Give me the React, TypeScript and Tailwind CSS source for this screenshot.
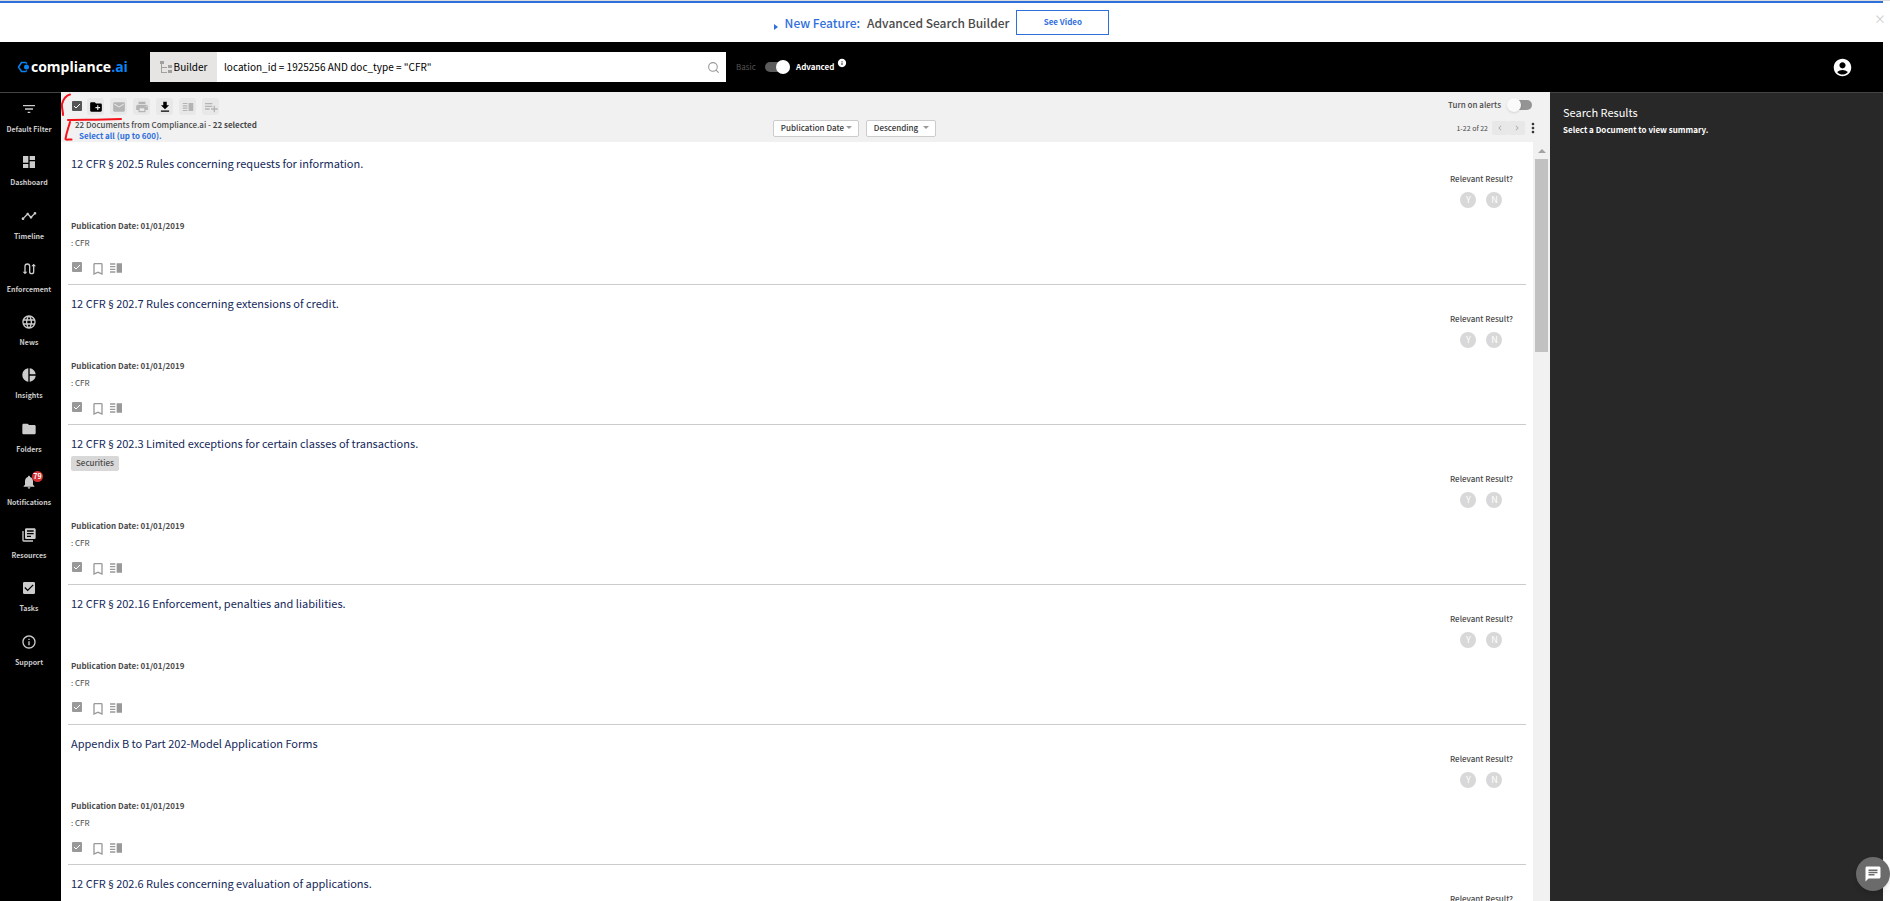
import type { ReactNode } from 'react';
import type { IconType } from 'react-icons';
import { Search } from 'lucide-react';
import {
  MdAccountCircle,
  MdChat,
  MdCheckBox,
  MdChevronLeft,
  MdChevronRight,
  MdBookmarkBorder,
  MdCreateNewFolder,
  MdDashboard,
  MdEmail,
  MdFileDownload,
  MdFilterList,
  MdFolder,
  MdInfo,
  MdInfoOutline,
  MdLanguage,
  MdLibraryBooks,
  MdMoreVert,
  MdNotifications,
  MdPieChart,
  MdPlaylistAdd,
  MdPrint,
  MdTimeline,
  MdVerticalSplit,
} from 'react-icons/md';

interface NavItem {
  label: string;
  icon: IconType | typeof EnforcementIcon;
  badge?: number;
}

interface Doc {
  title: string;
  tag?: string;
}

function EnforcementIcon({ className }: { className?: string }) {
  return (
    <svg viewBox="0 0 24 24" className={className} fill="none" stroke="currentColor" strokeWidth="2">
      <path d="M6 18V8a3.500 3.500 0 0 1 7 0v8a3 3 0 0 0 6 0V6" />
      <path d="M2.500 16h7L6 20zM15.500 8h7L19 4z" fill="currentColor" stroke="none" />
    </svg>
  );
}

const navItems: NavItem[] = [
  { label: 'Default Filter', icon: MdFilterList },
  { label: 'Dashboard', icon: MdDashboard },
  { label: 'Timeline', icon: MdTimeline },
  { label: 'Enforcement', icon: EnforcementIcon },
  { label: 'News', icon: MdLanguage },
  { label: 'Insights', icon: MdPieChart },
  { label: 'Folders', icon: MdFolder },
  { label: 'Notifications', icon: MdNotifications, badge: 79 },
  { label: 'Resources', icon: MdLibraryBooks },
  { label: 'Tasks', icon: MdCheckBox },
  { label: 'Support', icon: MdInfoOutline },
];

const documents: Doc[] = [
  { title: '12 CFR § 202.5 Rules concerning requests for information.' },
  { title: '12 CFR § 202.7 Rules concerning extensions of credit.' },
  { title: '12 CFR § 202.3 Limited exceptions for certain classes of transactions.', tag: 'Securities' },
  { title: '12 CFR § 202.16 Enforcement, penalties and liabilities.' },
  { title: 'Appendix B to Part 202-Model Application Forms' },
  { title: '12 CFR § 202.6 Rules concerning evaluation of applications.' },
];

function Banner() {
  return (
    <div className="relative flex h-[42px] shrink-0 flex-col bg-white">
      <div className="h-px bg-[#dcdcdc]" />
      <div className="mr-[7px] h-[2px] bg-[#2f6fdc]" />
      <div className="flex flex-1 items-center justify-center pr-[7px] text-[12px] font-medium">
        <span className="mt-2 mr-[7px] border-y-[3px] border-l-4 border-y-transparent border-l-[#2f6fdc]" />
        <span className="mr-[7px] text-[#2f6fdc]">New Feature:</span>
        <span className="mr-[7px] text-[#4a4a4a]">Advanced Search Builder</span>
        <button className="h-[25px] w-[93px] border border-[#2f6fdc] pb-[2px] text-[8px] font-bold text-[#2f6fdc]">
          See Video
        </button>
      </div>
      <button aria-label="Close" className="absolute top-3 right-1 text-[12px] leading-[14px] text-[#ccc]">
        ×
      </button>
    </div>
  );
}

function Header() {
  return (
    <header className="mr-[7px] flex h-[50px] shrink-0 items-center bg-black">
      {/* Logo */}
      <a href="#" className="flex w-[150px] items-center pb-[2px] pl-[17px] font-['Open_Sans',sans-serif] text-[14px] font-bold">
        <svg viewBox="0 0 14 12" className="mt-[2px] h-3 w-[14px]" fill="none">
          <path d="M10 2.500L8.500 1.500H4.500L1.500 6l3 4.500h4L10 9.500" stroke="#0a84f5" strokeWidth="1.500" />
          <circle cx="9.500" cy="6" r="2.500" fill="#0a84f5" />
        </svg>
        <span className="text-white">compliance</span>
        <span className="text-[#0a84f5]">.ai</span>
      </a>

      {/* Search */}
      <div className="flex h-[30px] w-[576px] items-center bg-white">
        <button className="flex h-full w-[67px] shrink-0 items-center justify-center bg-[#e6e5e3] pb-[2px] text-[10px] text-black">
          <svg viewBox="0 0 12 12" className="mt-[2px] mr-[2px] h-3 w-3" fill="#a0a0a0">
            <path d="M0 0h4v3H0zM8 4h4v3H8zM8 9h4v3H8zM1 3h1v3h5v1H2v4h5v1H1z" />
          </svg>
          Builder
        </button>
        <input
          aria-label="Search query"
          className="h-full min-w-0 flex-1 px-[7px] pb-[2px] text-[10px] text-black outline-none"
          defaultValue={'location_id = 1925256 AND doc_type = "CFR"'}
        />
        <button aria-label="Search" className="mr-[6px]">
          <Search className="h-[13px] w-[13px] text-[#999]" />
        </button>
      </div>

      {/* Mode switch */}
      <label className="ml-[10px] flex items-center text-[8px]">
        <span className="w-[29px] text-[#555]">Basic</span>
        <input
          type="checkbox"
          defaultChecked
          className="relative mr-[6px] h-[10px] w-[25px] appearance-none rounded-full bg-[#5c5c5c] before:absolute before:-top-[2px] before:right-0 before:h-[14px] before:w-[14px] before:rounded-full before:bg-white"
        />
        <span className="font-bold text-white">Advanced</span>
      </label>
      <MdInfo className="mb-2 ml-[3px] h-[10px] w-[10px] text-white" />
      <button aria-label="Account" className="mr-[30px] ml-auto">
        <MdAccountCircle className="h-[21px] w-[21px] text-white" />
      </button>
    </header>
  );
}

function Sidebar() {
  return (
    <nav className="w-[61px] shrink-0 border-t border-[#444] bg-black">
      <div className="flex h-[586px] flex-col">
        {navItems.map(({ label, icon: Icon, badge }) => (
          <a key={label} href="#" className="flex flex-1 flex-col items-center pr-[3px] pt-2 text-[7px] font-bold text-[#ccc]">
            <span className="relative mb-[7px]">
              <Icon className="h-4 w-4" />
              {badge && (
                <span className="absolute -top-[3px] left-[11px] flex h-[11px] w-[11px] items-center justify-center rounded-full bg-[#d32f2f] text-[7px] font-bold text-white">
                  {badge}
                </span>
              )}
            </span>
            <span className="leading-[10px] whitespace-nowrap">{label}</span>
          </a>
        ))}
      </div>
    </nav>
  );
}

function CheckMark({ label, className }: { label: string; className: string }) {
  return (
    <span className="relative flex">
      <input
        type="checkbox"
        aria-label={label}
        defaultChecked
        className={`h-[10px] w-[10px] appearance-none rounded-[1px] ${className}`}
      />
      <svg viewBox="0 0 10 10" className="pointer-events-none absolute inset-0 h-[10px] w-[10px]" fill="none" stroke="white">
        <path d="M2 5l2 2 4-4" />
      </svg>
    </span>
  );
}

function ToolButton({ label, dark, children }: { label: string; dark?: boolean; children: ReactNode }) {
  return (
    <button
      aria-label={label}
      className={`flex h-[17px] w-[17px] items-center justify-center rounded-[3px] bg-[#e8e8e8] ${dark ? 'text-black' : 'text-[#b4b4b4]'}`}
    >
      {children}
    </button>
  );
}

function SortSelect({ label, value, className }: { label: string; value: string; className: string }) {
  return (
    <span className="relative flex">
      <select
        aria-label={label}
        className={`h-[17px] appearance-none rounded-[2px] border border-[#ccc] bg-white pb-[2px] pl-[7px] text-[8px] leading-[13px] font-medium text-[#333] ${className}`}
      >
        <option>{value}</option>
      </select>
      <span className="pointer-events-none absolute top-[6px] right-[7px] border-x-[3px] border-t-[3px] border-x-transparent border-t-[#999]" />
    </span>
  );
}

function Toolbar() {
  return (
    <div className="grid h-[50px] shrink-0 grid-cols-[7fr_auto_6fr] bg-[#f1f1f1] text-[8px] text-[#4a4a4a]">
      <div className="pt-[6px] pl-[11px]">
        <div className="flex items-center gap-[6px]">
          <span className="-mr-px mb-[2px]">
            <CheckMark label="Select all" className="bg-[#555]" />
          </span>
          <ToolButton label="Add to folder" dark><MdCreateNewFolder className="h-[14px] w-[14px]" /></ToolButton>
          <ToolButton label="Email"><MdEmail className="h-[14px] w-[14px]" /></ToolButton>
          <ToolButton label="Print"><MdPrint className="h-[14px] w-[14px]" /></ToolButton>
          <ToolButton label="Download" dark><MdFileDownload className="h-[14px] w-[14px]" /></ToolButton>
          <ToolButton label="Compare"><MdVerticalSplit className="h-[14px] w-[14px]" /></ToolButton>
          <ToolButton label="Add to list"><MdPlaylistAdd className="h-[16px] w-[16px]" /></ToolButton>
        </div>
        <p className="mt-1 pl-[3px] leading-[11px] font-medium">
          22 Documents from Compliance.ai - <b>22 selected</b>
        </p>
        <a href="#" className="block pl-[7px] leading-[11px] font-bold text-[#2f6fdc]">Select all (up to 600).</a>
      </div>

      <div className="flex items-start gap-[7px] pt-7 pr-1">
        <SortSelect label="Sort by" value="Publication Date" className="w-[86px]" />
        <SortSelect label="Sort order" value="Descending" className="w-[70px]" />
      </div>

      <div className="flex flex-col items-end pr-[9px]">
        <label className="mt-[6px] mr-[9px] flex h-[14px] items-center gap-[7px] font-medium">
          Turn on alerts
          <input
            type="checkbox"
            className="relative h-[10px] w-[24px] appearance-none rounded-full bg-[#949494] before:absolute before:-top-[2px] before:-left-[1px] before:h-[14px] before:w-[14px] before:rounded-full before:bg-[#fafafa] before:shadow"
          />
        </label>
        <div className="mt-[9px] flex h-[14px] items-center">
          <span className="mr-1 text-[7px]">1-22 of 22</span>
          <button aria-label="Previous page" className="flex h-[14px] w-4 items-center justify-center rounded-[2px] bg-[#e8e8e8] text-[#aaa]">
            <MdChevronLeft className="h-[10px] w-[10px]" />
          </button>
          <button aria-label="Next page" className="flex h-[14px] w-[17px] items-center justify-center rounded-[2px] bg-[#e8e8e8] text-[#aaa]">
            <MdChevronRight className="h-[10px] w-[10px]" />
          </button>
          <button aria-label="More">
            <MdMoreVert className="h-4 w-4 text-[#333]" />
          </button>
        </div>
      </div>
    </div>
  );
}

// The CJK face draws § full width, so the sign is set in Lato
function DocumentTitle({ title }: { title: string }) {
  const [before, after] = title.split('§');
  return (
    <h2 className="h-[27px] pt-[9px] text-[11px] leading-[18px] text-[#14285a]">
      {before}
      {after && <span className="font-['Lato',sans-serif] leading-none">§</span>}
      {after}
    </h2>
  );
}

function DocumentRow({ doc }: { doc: Doc }) {
  return (
    <article className="mr-[7px] ml-[7px] flex justify-between border-b border-[#ccc] pl-[3px] text-[8px] text-[#4a4a4a]">
      <div>
        <DocumentTitle title={doc.title} />
        {doc.tag && (
          <div className="mt-1 -mb-[1px] flex h-[17px]">
            <span className="h-[15px] rounded-[2px] bg-[#d8d8d8] px-[5px] leading-[14px] font-medium">{doc.tag}</span>
          </div>
        )}
        <p className="mt-12 h-3 leading-3 font-bold">Publication Date: 01/01/2019</p>
        <p className="mt-[5px] h-3 leading-3">: CFR</p>
        <div className="mt-[10px] mb-2 flex h-[17px] items-center text-[#999]">
          <span className="mb-[2px] ml-[1px]">
            <CheckMark label={`Select ${doc.title}`} className="bg-[#999]" />
          </span>
          <button aria-label="Bookmark" className="mt-[2px] ml-2"><MdBookmarkBorder className="h-4 w-4" /></button>
          <button aria-label="Compare" className="ml-[2px]"><MdVerticalSplit className="h-4 w-4" /></button>
        </div>
      </div>
      <div className={doc.tag ? 'pt-12 pr-[13px]' : 'pt-7 pr-[13px]'}>
        <p className="leading-3 font-medium">Relevant Result?</p>
        <div className="mt-[7px] flex justify-center gap-[10px] text-[9px] leading-4 text-white">
          <button className="h-4 w-4 rounded-full bg-[#d8d8d8]">Y</button>
          <button className="h-4 w-4 rounded-full bg-[#d8d8d8]">N</button>
        </div>
      </div>
    </article>
  );
}

function Scrollbar() {
  return (
    <div className="flex w-[17px] shrink-0 flex-col items-center bg-[#f1f1f1]">
      <span className="mt-[7px] border-x-4 border-b-4 border-x-transparent border-b-[#a3a3a3]" />
      <span className="mt-[6px] h-[193px] w-[13px] bg-[#c1c1c1]" />
    </div>
  );
}

// Hand-drawn highlight around the bulk selection controls
function MarkerStrokes() {
  return (
    <svg viewBox="0 0 72 52" className="pointer-events-none absolute top-0 left-0 h-[52px] w-[72px]" fill="none" stroke="#f5121b" strokeWidth="2" strokeLinecap="round">
      <path d="M9 2.500C5 3 2 8 1 12c-.5 3 1 7 1 11" />
      <path d="M7 28c12-.5 24 0 36-.5l17-.5" />
      <path d="M9 30c-1.500 6-3.500 10-4.500 17 1.500 1.500 3 0 6 .5" />
    </svg>
  );
}

export default function App() {
  return (
    <div className="relative flex h-screen flex-col overflow-hidden bg-white font-['Noto_Sans_CJK_SC',sans-serif]">
      <Banner />
      <Header />
      <div className="mr-[7px] flex min-h-0 flex-1">
        <Sidebar />
        <main className="relative flex min-w-0 flex-1 flex-col">
          <Toolbar />
          <div className="flex min-h-0 flex-1">
            <div className="min-w-0 flex-1 overflow-y-auto pt-[3px] [scrollbar-width:none]">
              {documents.map((doc) => (
                <DocumentRow key={doc.title} doc={doc} />
              ))}
            </div>
            <Scrollbar />
          </div>
          <MarkerStrokes />
        </main>
        <aside className="w-[333px] shrink-0 border-t border-[#444] bg-[#282828] pt-[10px] pl-[13px] text-white">
          <h2 className="text-[11px] leading-[18px]">Search Results</h2>
          <p className="mt-[3px] text-[8px] leading-3 font-bold">Select a Document to view summary.</p>
        </aside>
      </div>
      <button
        aria-label="Chat"
        className="absolute right-0 bottom-[10px] flex h-[34px] w-[34px] items-center justify-center rounded-full bg-[#6b6b6b] shadow-md"
      >
        <MdChat className="h-[18px] w-[18px] text-white" />
      </button>
    </div>
  );
}
